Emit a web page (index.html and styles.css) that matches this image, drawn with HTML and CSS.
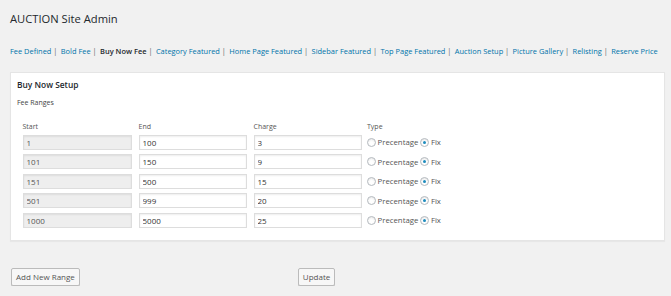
FILE: index.html
```html
<!DOCTYPE html>
<html lang="en">
<head>
  <meta charset="UTF-8">
  <title>AUCTION Site Admin</title>
  <link rel="stylesheet" href="styles.css">
</head>
<body>
<div class="wrap">
  <h2>AUCTION Site Admin</h2>

  <ul class="subnav">
    <li><a href="#">Fee Defined</a> |</li>
    <li><a href="#">Bold Fee</a> |</li>
    <li><strong>Buy Now Fee</strong> |</li>
    <li><a href="#">Category Featured</a> |</li>
    <li><a href="#">Home Page Featured</a> |</li>
    <li><a href="#">Sidebar Featured</a> |</li>
    <li><a href="#">Top Page Featured</a> |</li>
    <li><a href="#">Auction Setup</a> |</li>
    <li><a href="#">Picture Gallery</a> |</li>
    <li><a href="#">Relisting</a> |</li>
    <li><a href="#">Reserve Price</a></li>
  </ul>

  <div class="postbox">
    <h3>Buy Now Setup</h3>
    <p class="sub">Fee Ranges</p>

    <div class="ranges">
      <div class="head">Start</div>
      <div class="head">End</div>
      <div class="head">Charge</div>
      <div class="head">Type</div>

      <input type="text" class="start" value="1" readonly>
      <input type="text" value="100">
      <input type="text" value="3">
      <div class="type"><label><input type="radio" name="t1"> Precentage</label><label><input type="radio" name="t1" checked> Fix</label></div>

      <input type="text" class="start" value="101" readonly>
      <input type="text" value="150">
      <input type="text" value="9">
      <div class="type"><label><input type="radio" name="t2"> Precentage</label><label><input type="radio" name="t2" checked> Fix</label></div>

      <input type="text" class="start" value="151" readonly>
      <input type="text" value="500">
      <input type="text" value="15">
      <div class="type"><label><input type="radio" name="t3"> Precentage</label><label><input type="radio" name="t3" checked> Fix</label></div>

      <input type="text" class="start" value="501" readonly>
      <input type="text" value="999">
      <input type="text" value="20">
      <div class="type"><label><input type="radio" name="t4"> Precentage</label><label><input type="radio" name="t4" checked> Fix</label></div>

      <input type="text" class="start" value="1000" readonly>
      <input type="text" value="5000">
      <input type="text" value="25">
      <div class="type"><label><input type="radio" name="t5"> Precentage</label><label><input type="radio" name="t5" checked> Fix</label></div>
    </div>
  </div>

  <div class="actions">
    <button class="button">Add New Range</button>
    <button class="button">Update</button>
  </div>
</div>
</body>
</html>
```

FILE: styles.css
```css
body {
  margin: 0;
  background: #f1f1f1;
  font-family: "Open Sans", sans-serif;
  color: #444;
}
.wrap {
  padding: 0 6px 0 10px;
}
h2 {
  margin: 0;
  padding-top: 11px;
  font-size: 11.2px;
  font-weight: 400;
  line-height: 16px;
  color: #23282d;
}
.subnav {
  list-style: none;
  margin: 0;
  padding: 0;
  margin-top: 19px;
  display: flex;
  font-size: 7.45px;
  line-height: 10px;
  color: #666;
}
.subnav li {
  margin-right: 3.4px;
  white-space: nowrap;
}
.subnav a {
  color: #0073aa;
  text-decoration: none;
}
.subnav strong {
  color: #23282d;
  font-weight: 600;
}
.postbox {
  margin-top: 16px;
  background: #fff;
  border: 1px solid #e5e5e5;
  box-shadow: 0 1px 1px rgba(0,0,0,.04);
  padding: 0 6px 12px 6px;
}
h3 {
  margin: 0;
  padding-top: 6px;
  font-size: 8.4px;
  font-weight: 600;
  line-height: 12px;
  color: #23282d;
}
.sub {
  margin: 7px 0 0;
  font-size: 7px;
  line-height: 10px;
  color: #444;
}
.ranges {
  margin: 7px 0 0 5.5px;
  display: grid;
  grid-template-columns: 116px 115px 113.5px auto;
  grid-auto-rows: 15px;
  row-gap: 4.6px;
  align-items: center;
  font-size: 7px;
}
.head {
  color: #555;
  line-height: 10px;
  align-self: end;
  margin-bottom: -2px;
}
.ranges input[type="text"] {
  box-sizing: border-box;
  width: 108px;
  height: 15px;
  margin: 0;
  padding: 0 3px;
  border: 1px solid #ddd;
  box-shadow: inset 0 1px 2px rgba(0,0,0,.07);
  font-family: "Open Sans", sans-serif;
  font-size: 8px;
  color: #333;
  background: #fff;
}
.ranges input.start {
  width: 109px;
  background: #eee;
  color: #555;
}
.type {
  display: flex;
  align-items: center;
  color: #555;
  font-size: 7.8px;
}
.type label {
  display: flex;
  align-items: center;
  margin-right: 2px;
}
.type input[type="radio"] {
  appearance: none;
  -webkit-appearance: none;
  box-sizing: border-box;
  width: 9px;
  height: 9px;
  margin: 0 1.5px 0 0;
  border: 1px solid #b4b9be;
  border-radius: 50%;
  background: #fff;
  box-shadow: inset 0 1px 2px rgba(0,0,0,.1);
  position: relative;
}
.type input[type="radio"]:checked::before {
  content: "";
  position: absolute;
  left: 2px;
  top: 2px;
  width: 3px;
  height: 3px;
  border-radius: 50%;
  background: #1e8cbe;
}
.actions {
  margin-top: 27px;
  display: flex;
}
.button {
  height: 18px;
  padding: 0 4px;
  margin: 0 0 0 1px;
  border: 1px solid #bbb;
  border-radius: 2px;
  background: #f7f7f7;
  box-shadow: 0 1px 0 #ccc;
  font-family: "Open Sans", sans-serif;
  font-size: 8px;
  color: #555;
  line-height: 16px;
}
.button + .button {
  margin-left: 218px;
}
```
